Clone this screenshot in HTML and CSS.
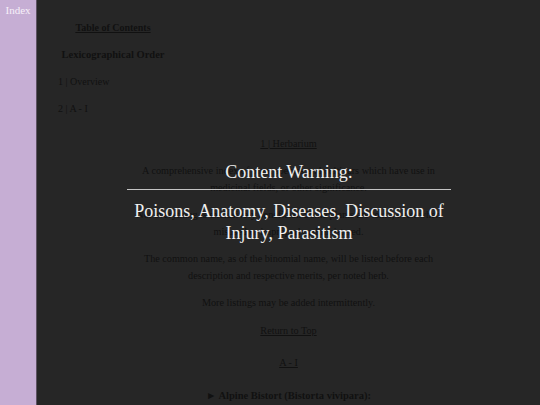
FILE: index.html
```html
<!DOCTYPE html>
<html>
<head>
<meta charset="utf-8">
<link rel="stylesheet" href="styles.css">
</head>
<body>
<div class="page">
  <nav class="sidebar">
    <span class="side-link">Index</span>
  </nav>
  <main class="main">
    <div class="toc">
      <p class="toc-title">Table of Contents</p>
      <p class="toc-sub">Lexicographical Order</p>
      <p class="toc-item">1 | Overview</p>
      <p class="toc-item">2 | A - I</p>
    </div>
    <div class="content">
      <p class="section-link">1 | Herbarium</p>
      <p class="para">A comprehensive index of plant species and cultivars which have use in medicinal fields, or other significance.</p>
      <p class="para">Not everything is exclusively beneficial. Some plants are toxic, even when misused or improperly administered.</p>
      <p class="para">The common name, as of the binomial name, will be listed before each description and respective merits, per noted herb.</p>
      <p class="para">More listings may be added intermittently.</p>
      <p class="section-link top-link">Return to Top</p>
      <p class="section-link range">A - I</p>
      <p class="entry">&#9658; Alpine Bistort (Bistorta vivipara):</p>
    </div>
    <div class="warning">
      <p class="warning-title">Content Warning:</p>
      <p class="warning-body">Poisons, Anatomy, Diseases, Discussion of Injury, Parasitism</p>
    </div>
  </main>
</div>
</body>
</html>
```
FILE: styles.css
```css
html, body {
  margin: 0;
  padding: 0;
  height: 100%;
  overflow: hidden;
}
body {
  font-family: "Liberation Serif", "Times New Roman", serif;
  background: #262626;
}
.page {
  display: flex;
  height: 405px;
}
.sidebar {
  width: 36px;
  flex: none;
  background: #c6aed4;
  border-right: 1px solid #5d5262;
  text-align: center;
  line-height: 18px;
}
.side-link {
  color: #f6f0f9;
  font-size: 11px;
}
.main {
  flex: 1;
  position: relative;
  background: #262626;
  color: #111111;
}
.toc {
  margin-left: 21px;
  width: 110px;
  padding-top: 14px;
}
.toc p {
  margin: 0;
  line-height: 27px;
  font-size: 10px;
}
.toc-title {
  font-weight: bold;
  text-decoration: underline;
  text-align: center;
}
.toc-sub {
  font-weight: bold;
  font-size: 10.5px !important;
  text-align: center;
}
.content {
  margin-top: 13px;
  text-align: center;
  font-size: 10.2px;
  line-height: 17px;
  padding: 0 94px;
}
.content p {
  margin: 0 0 10px;
}
.section-link {
  text-decoration: underline;
}
.top-link {
  margin-top: 11px !important;
}
.range {
  margin-top: 15px !important;
}
.entry {
  margin-top: 16px !important;
  font-weight: bold;
  font-size: 10.5px;
}
.warning {
  position: absolute;
  left: 90px;
  top: 161px;
  width: 324px;
  text-align: center;
  color: #f0f0f0;
  font-size: 18px;
  line-height: 22px;
}
.warning p {
  margin: 0;
}
.warning-title {
  padding-bottom: 6px;
  border-bottom: 1px solid #c4c4c4;
  margin-bottom: 10px !important;
}
```
